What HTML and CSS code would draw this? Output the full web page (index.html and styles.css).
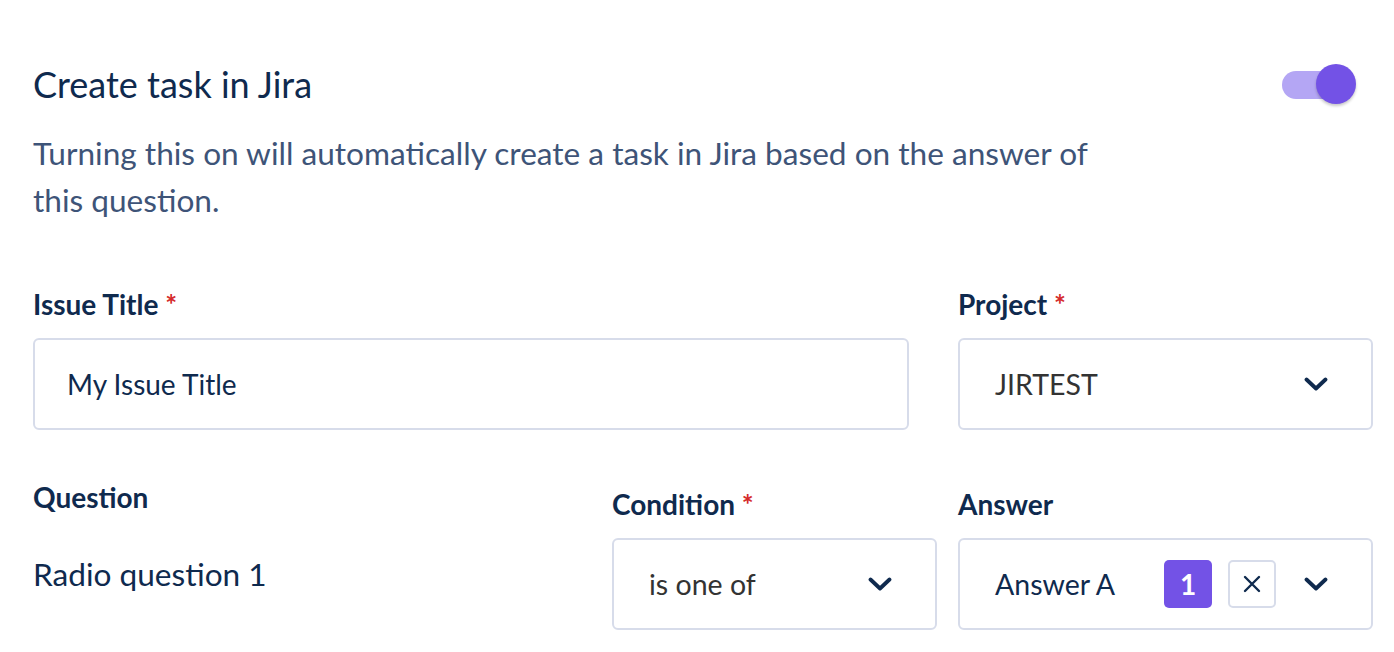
FILE: index.html
```html
<!DOCTYPE html>
<html lang="en">
<head>
<meta charset="utf-8">
<title>Create task in Jira</title>
<link rel="stylesheet" href="styles.css">
</head>
<body>
<div class="panel">
  <div class="header">
    <h2 class="title">Create task in Jira</h2>
    <div class="toggle" role="switch" aria-checked="true">
      <span class="toggle-track"></span>
      <span class="toggle-knob"></span>
    </div>
  </div>
  <p class="desc">Turning this on will automatically create a task in Jira based on the answer of this question.</p>

  <div class="row row-top">
    <div class="field">
      <label class="label">Issue Title <span class="req">*</span></label>
      <div class="input"><span class="input-text">My Issue Title</span></div>
    </div>
    <div class="field">
      <label class="label">Project <span class="req">*</span></label>
      <div class="select">
        <span class="select-text gray">JIRTEST</span>
        <svg class="chev" width="24" height="14" viewBox="0 0 24 14"><path d="M2.5 2.5 L12 11.5 L21.5 2.5" fill="none" stroke="#0f2a4e" stroke-width="3.8" stroke-linecap="round" stroke-linejoin="round"/></svg>
      </div>
    </div>
  </div>

  <div class="row row-bottom">
    <div class="field question">
      <div class="label">Question</div>
      <div class="question-text">Radio question 1</div>
    </div>
    <div class="field">
      <label class="label">Condition <span class="req">*</span></label>
      <div class="select">
        <span class="select-text gray">is one of</span>
        <svg class="chev" width="24" height="14" viewBox="0 0 24 14"><path d="M2.5 2.5 L12 11.5 L21.5 2.5" fill="none" stroke="#0f2a4e" stroke-width="3.8" stroke-linecap="round" stroke-linejoin="round"/></svg>
      </div>
    </div>
    <div class="field">
      <label class="label">Answer</label>
      <div class="select">
        <span class="select-text navy">Answer A</span>
        <span class="count">1</span>
        <span class="clear">
          <svg width="18" height="18" viewBox="0 0 18 18"><path d="M2 2 L16 16 M16 2 L2 16" fill="none" stroke="#0f2a4e" stroke-width="2.4" stroke-linecap="round"/></svg>
        </span>
        <svg class="chev chev-answer" width="24" height="14" viewBox="0 0 24 14"><path d="M2.5 2.5 L12 11.5 L21.5 2.5" fill="none" stroke="#0f2a4e" stroke-width="3.8" stroke-linecap="round" stroke-linejoin="round"/></svg>
      </div>
    </div>
  </div>
</div>
</body>
</html>
```

FILE: styles.css
```css
* { box-sizing: border-box; }

html, body {
  margin: 0;
  padding: 0;
  background: #ffffff;
}

body {
  font-family: Lato, "Noto Sans", sans-serif;
  color: #0f2a4e;
}

.panel {
  padding: 63px 21px 0 33px;
}

.header {
  display: flex;
  align-items: center;
  justify-content: space-between;
  padding-right: 17px;
}

.title {
  margin: 0;
  font-size: 36px;
  line-height: 43px;
  font-weight: 400;
  color: #0f2a4e;
}

.toggle {
  position: relative;
  width: 74px;
  height: 40px;
  margin-top: -2px;
}

.toggle-track {
  position: absolute;
  left: 0;
  top: 7px;
  width: 68px;
  height: 28px;
  border-radius: 14px;
  background: #b4a6f4;
}

.toggle-knob {
  position: absolute;
  right: 0;
  top: 0;
  width: 40px;
  height: 40px;
  border-radius: 50%;
  background: #7352e6;
  box-shadow: 0 2px 3px rgba(0, 0, 0, 0.22);
}

.desc {
  margin: 24px 0 0 0;
  max-width: 1070px;
  font-size: 31.6px;
  line-height: 47px;
  color: #3e5478;
}

.row {
  display: grid;
  align-items: start;
}

.row-top {
  margin-top: 63px;
  grid-template-columns: 1fr 415px;
  column-gap: 49px;
}

.row-bottom {
  margin-top: 57px;
  grid-template-columns: 1fr 325px 415px;
  column-gap: 21px;
}

.field {
  display: flex;
  flex-direction: column;
}

.label {
  display: block;
  font-size: 28px;
  line-height: 34px;
  font-weight: 700;
  color: #0f2a4e;
  margin-bottom: 17px;
}

.req {
  color: #d52b2b;
  font-weight: 700;
}

.question {
  margin-top: -7px;
}

.question-text {
  margin-top: 25px;
  font-size: 31.6px;
  line-height: 36px;
  color: #0f2a4e;
}

.input,
.select {
  height: 92px;
  border: 2px solid #d7dcea;
  border-radius: 6px;
  display: flex;
  align-items: center;
  background: #fff;
}

.input {
  padding-left: 32px;
}

.input-text {
  font-size: 28px;
  color: #0f2a4e;
}

.select {
  padding-left: 35px;
  padding-right: 43px;
}

.select-text {
  flex: 1;
  font-size: 28.5px;
}

.gray { color: #333333; }
.navy { color: #0f2a4e; }

.count {
  width: 48px;
  height: 48px;
  border-radius: 5px;
  background: #7352e6;
  color: #ffffff;
  font-size: 28px;
  font-weight: 700;
  display: flex;
  align-items: center;
  justify-content: center;
}

.clear {
  width: 48px;
  height: 48px;
  margin-left: 16px;
  border: 2px solid #d7dcea;
  border-radius: 5px;
  display: flex;
  align-items: center;
  justify-content: center;
}

.chev {
  display: block;
  flex: none;
}

.chev-answer {
  margin-left: 28px;
}
```
